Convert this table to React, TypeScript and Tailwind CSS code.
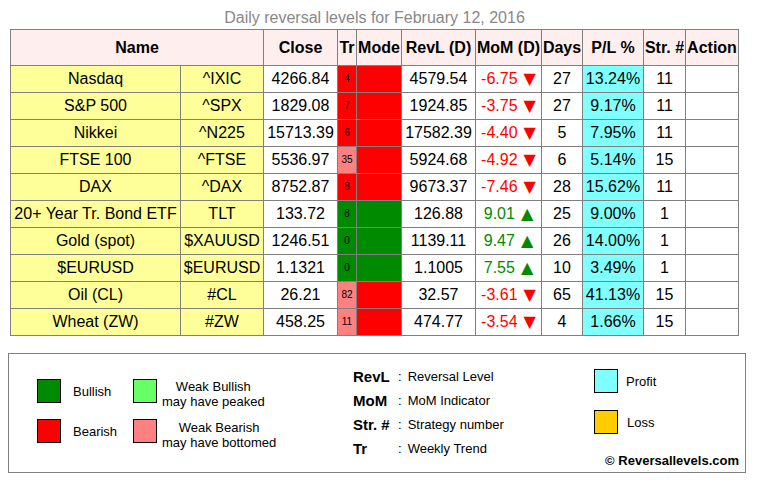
import React from "react";

type Tr = "red" | "light" | "green";
type Row = {
  name: string;
  tick: string;
  close: string;
  tr: string;
  trc: Tr;
  mode: "red" | "green";
  revl: string;
  mom: string;
  up: boolean;
  days: string;
  pl: string;
  str: string;
};

const rows: Row[] = [
  { name: "Nasdaq", tick: "^IXIC", close: "4266.84", tr: "4", trc: "red", mode: "red", revl: "4579.54", mom: "-6.75", up: false, days: "27", pl: "13.24%", str: "11" },
  { name: "S&P 500", tick: "^SPX", close: "1829.08", tr: "7", trc: "red", mode: "red", revl: "1924.85", mom: "-3.75", up: false, days: "27", pl: "9.17%", str: "11" },
  { name: "Nikkei", tick: "^N225", close: "15713.39", tr: "6", trc: "red", mode: "red", revl: "17582.39", mom: "-4.40", up: false, days: "5", pl: "7.95%", str: "11" },
  { name: "FTSE 100", tick: "^FTSE", close: "5536.97", tr: "35", trc: "light", mode: "red", revl: "5924.68", mom: "-4.92", up: false, days: "6", pl: "5.14%", str: "15" },
  { name: "DAX", tick: "^DAX", close: "8752.87", tr: "8", trc: "red", mode: "red", revl: "9673.37", mom: "-7.46", up: false, days: "28", pl: "15.62%", str: "11" },
  { name: "20+ Year Tr. Bond ETF", tick: "TLT", close: "133.72", tr: "8", trc: "green", mode: "green", revl: "126.88", mom: "9.01", up: true, days: "25", pl: "9.00%", str: "1" },
  { name: "Gold (spot)", tick: "$XAUUSD", close: "1246.51", tr: "0", trc: "green", mode: "green", revl: "1139.11", mom: "9.47", up: true, days: "26", pl: "14.00%", str: "1" },
  { name: "$EURUSD", tick: "$EURUSD", close: "1.1321", tr: "0", trc: "green", mode: "green", revl: "1.1005", mom: "7.55", up: true, days: "10", pl: "3.49%", str: "1" },
  { name: "Oil (CL)", tick: "#CL", close: "26.21", tr: "82", trc: "light", mode: "red", revl: "32.57", mom: "-3.61", up: false, days: "65", pl: "41.13%", str: "15" },
  { name: "Wheat (ZW)", tick: "#ZW", close: "458.25", tr: "11", trc: "light", mode: "red", revl: "474.77", mom: "-3.54", up: false, days: "4", pl: "1.66%", str: "15" },
];

const trBg: Record<Tr, string> = {
  red: "bg-[#ff0000]",
  light: "bg-[#ff8080]",
  green: "bg-[#008a00]",
};
const modeBg = {
  red: "bg-[#ff0000]",
  green: "bg-[#008a00]",
};

const cell =
  "border-r border-b border-[#808080] flex items-center justify-center whitespace-nowrap h-[27px] text-[16px] leading-[18px]";
const head =
  "border-r border-b border-[#808080] flex items-center justify-center whitespace-nowrap h-[36px] bg-[#feeeee] font-bold text-[16px] leading-[18px]";

function Swatch({ c }: { c: string }) {
  return <div className={`w-[24px] h-[24px] border border-black shrink-0 ${c}`} />;
}

export default function App() {
  return (
    <div className="w-[760px] h-[480px] bg-white text-black font-['Liberation_Sans',Arial,sans-serif] overflow-hidden">
      <div className="h-[29px] pt-[9px] ml-[10px] w-[729px] text-center text-[16px] leading-[18px] text-[#888888] whitespace-nowrap">
        Daily reversal levels for February 12, 2016
      </div>
      <div className="ml-[10px] w-[729px] border-l border-t border-[#808080] grid grid-cols-[170px_83px_74px_19px_45px_74px_66px_41px_61px_42px_53px]">
        <div className={`${head} col-span-2`}>Name</div>
        <div className={head}>Close</div>
        <div className={head}>Tr</div>
        <div className={head}>Mode</div>
        <div className={head}>RevL (D)</div>
        <div className={head}>MoM (D)</div>
        <div className={head}>Days</div>
        <div className={head}>P/L %</div>
        <div className={head}>Str. #</div>
        <div className={head}>Action</div>
        {rows.map((r) => (
          <React.Fragment key={r.name}>
            <div className={`${cell} bg-[#ffff99]`}>{r.name}</div>
            <div className={`${cell} bg-[#ffff99]`}>{r.tick}</div>
            <div className={cell}>{r.close}</div>
            <div className={`${cell} ${trBg[r.trc]}`}>
              <span className="text-[10px] leading-[12px]">{r.tr}</span>
            </div>
            <div className={`${cell} ${modeBg[r.mode]}`} />
            <div className={cell}>{r.revl}</div>
            <div className={`${cell} ${r.up ? "text-[#008a00]" : "text-[#ff0000]"}`}>
              {r.mom}
              <span className="ml-[6px] font-['DejaVu_Sans',sans-serif] text-[16px] leading-[18px]">
                {r.up ? "▲" : "▼"}
              </span>
            </div>
            <div className={cell}>{r.days}</div>
            <div className={`${cell} bg-[#80ffff]`}>{r.pl}</div>
            <div className={cell}>{r.str}</div>
            <div className={cell} />
          </React.Fragment>
        ))}
      </div>

      <div className="ml-[8px] mt-[17px] w-[738px] h-[120px] border border-[#808080] flex">
        <div className="w-[344px] pl-[28px] pt-[25px] flex flex-col gap-[16px] text-[13px]">
          <div className="flex items-start h-[24px]">
            <Swatch c="bg-[#008a00]" />
            <div className="w-[72px] pl-[12px] h-[24px] flex items-center leading-[15px]">Bullish</div>
            <Swatch c="bg-[#66ff66]" />
            <div className="ml-[5px] text-center leading-[15px] whitespace-nowrap">
              <div>Weak Bullish</div>
              <div>may have peaked</div>
            </div>
          </div>
          <div className="flex items-start h-[24px]">
            <Swatch c="bg-[#ff0000]" />
            <div className="w-[72px] pl-[12px] h-[24px] flex items-center leading-[15px]">Bearish</div>
            <Swatch c="bg-[#ff8080]" />
            <div className="ml-[5px] mt-[1px] text-center leading-[15px] whitespace-nowrap">
              <div>Weak Bearish</div>
              <div>may have bottomed</div>
            </div>
          </div>
        </div>

        <div className="w-[241px] pt-[11px] flex flex-col">
          {[
            ["RevL", "Reversal Level"],
            ["MoM", "MoM Indicator"],
            ["Str. #", "Strategy number"],
            ["Tr", "Weekly Trend"],
          ].map(([k, v]) => (
            <div key={k} className="h-[24px] flex items-center whitespace-nowrap">
              <div className="w-[45px] font-bold text-[15px] leading-[24px]">{k}</div>
              <div className="text-[13px] leading-[15px] -mt-[2px]">:</div>
              <div className="ml-[6px] text-[13px] leading-[15px] -mt-[2px]">{v}</div>
            </div>
          ))}
        </div>

        <div className="flex-1 pt-[15px] flex flex-col text-[13px]">
          <div className="h-[24px] flex items-center">
            <Swatch c="bg-[#80ffff]" />
            <div className="ml-[8px] leading-[15px]">Profit</div>
          </div>
          <div className="h-[24px] flex items-center mt-[17px]">
            <Swatch c="bg-[#ffcc00]" />
            <div className="ml-[9px] leading-[15px]">Loss</div>
          </div>
          <div className="mt-auto self-end pr-[6px] pb-[4px] font-bold leading-[15px] whitespace-nowrap">
            © Reversallevels.com
          </div>
        </div>
      </div>
    </div>
  );
}
